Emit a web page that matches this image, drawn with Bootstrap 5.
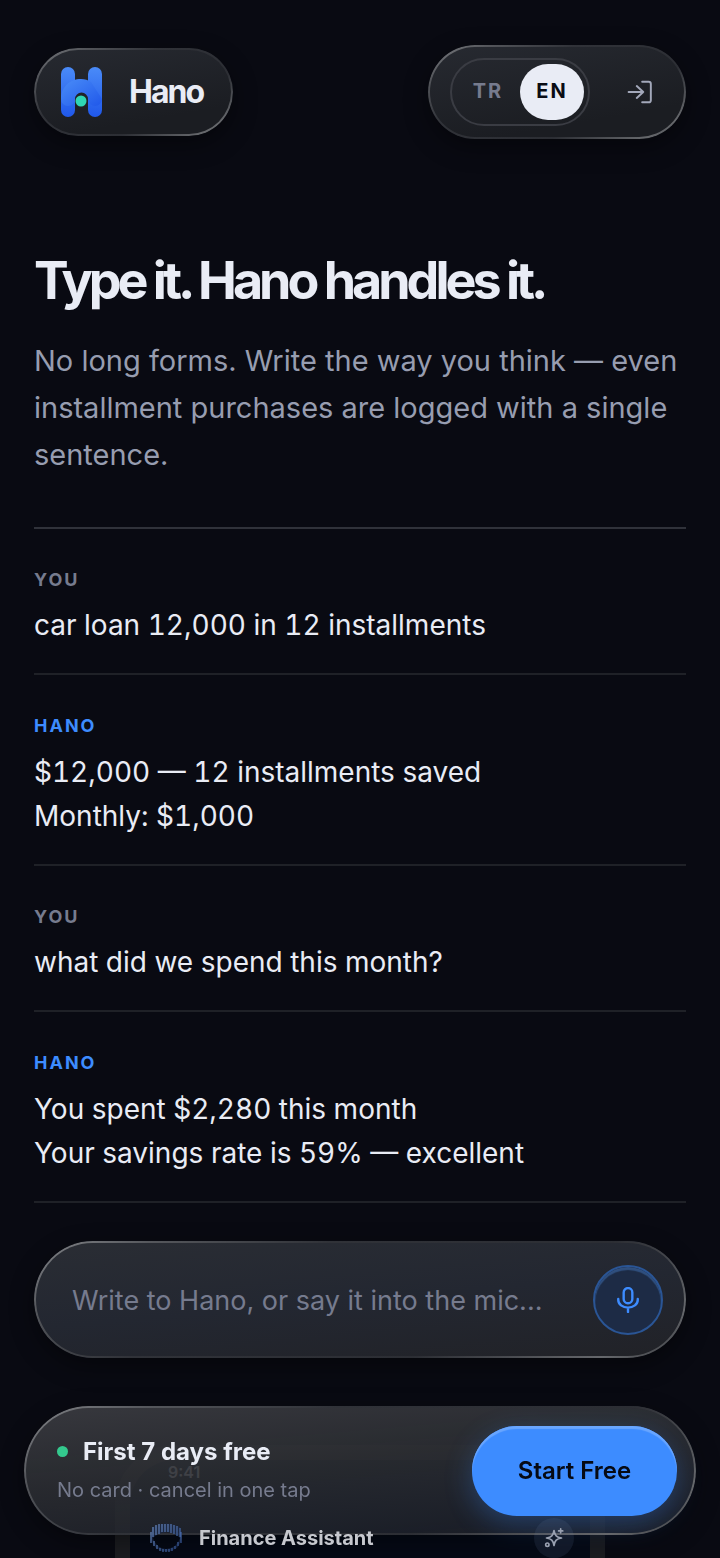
<!DOCTYPE html>
<html lang="en" data-bs-theme="dark">
<head>
<meta charset="utf-8">
<meta name="viewport" content="width=device-width, initial-scale=1">
<title>Hano</title>
<link href="https://cdn.jsdelivr.net/npm/bootstrap@5.3.0/dist/css/bootstrap.min.css" rel="stylesheet">
<style>
:root{--ink:#e9ecf5;--soft:#979db0;--dim:#767b8e;--accent:#3d8cff}
body{font-family:Inter,"Liberation Sans",sans-serif;background:#090a12;color:var(--ink)}
.shell{padding:45px 34px 0}
/* frosted pill with a lit rim at the top left and bottom right */
.glass{position:relative;border-radius:999px;background:linear-gradient(170deg,#272a31,#1b1d22 75%);box-shadow:0 8px 24px rgba(0,0,0,.4)}
.glass::before{content:"";position:absolute;inset:0;border-radius:inherit;padding:2px;pointer-events:none;
background:linear-gradient(150deg,#85878b 0,#55575c 14%,#303238 35%,#2c2e34 68%,#66686c 90%,#36383d 100%);
-webkit-mask:linear-gradient(#000 0 0) content-box,linear-gradient(#000 0 0);-webkit-mask-composite:xor;mask-composite:exclude}
.brand{height:88px;padding:0 30px 0 26px;gap:26px;color:var(--ink)}
.brand-name{font-size:32px;font-weight:700;letter-spacing:-2px;line-height:40px}
.tools{height:94px;padding:0 24px 0 22px;gap:28px}
.langs{height:68px;padding:4px;border:2px solid #3a3c43;border-radius:34px}
.lang{height:56px;width:64px;border:0;border-radius:28px;background:none;color:var(--dim);font-size:20px;font-weight:700;letter-spacing:2px;padding:0 0 2px}
.lang.on{background:var(--ink);color:#0a0c14}
.login{width:44px;height:44px;color:#a3a8ba}
.title{font-size:52px;font-weight:700;letter-spacing:-4px;line-height:60px;margin:112px 0 0;color:var(--ink)}
.intro{font-size:29px;line-height:47px;color:var(--soft);margin:26px 0 0}
.chat{margin:49px 0 0;border-top:2px solid #30323a}
.turn{padding:36px 0 26px;border-bottom:2px solid #1f2127}
.who{font-size:18px;line-height:30px;font-weight:700;letter-spacing:2px;color:var(--dim);margin:0 0 8px}
.who.hano{color:var(--accent);margin-bottom:9px}
.said{font-size:28px;line-height:44px;margin:0;font-variant-numeric:tabular-nums}
.ask{height:117px;margin-top:38px;padding:0 23px 0 38px;gap:24px;background:linear-gradient(175deg,#2a2d34,#232731 50%,#212227)}
.ask-box{font-size:27px;color:var(--ink);background:none;border:0;outline:0;padding:4px 0 0;min-width:0}
.ask-box::placeholder{color:var(--dim);opacity:1}
.mic{width:70px;height:70px;border-radius:50%;border:2px solid #2a5595;background:#1d2b45;color:var(--accent);box-shadow:inset 0 3px 1px #30507f}
.phone{margin:87px 81px 0;border:15px solid #1c1d21;border-bottom:0;border-radius:60px 60px 0 0;background:#050a16;padding:0 16px 0 20px}
.clock{font-size:16px;line-height:20px;font-weight:600;color:#c0c2c8;margin-bottom:36px;padding:2px 0 0 18px}
/* the assistant header stays legible across the edge of the offer bar */
.phone-head{position:relative;z-index:2;gap:16px}
.phone-title{font-size:20px;font-weight:700;line-height:40px;color:#c6c8ce}
.spark{width:40px;height:40px;border-radius:50%;background:rgba(110,130,170,.13);color:#9aa1b1}
.offer{position:fixed;z-index:1;left:24px;right:24px;bottom:23px;height:129px;padding:0 19px 0 33px;background:linear-gradient(175deg,rgba(58,59,64,.95),rgba(44,46,51,.88) 45%,rgba(34,37,45,.84) 80%,rgba(32,35,43,.7))}
.offer-title{font-size:24px;font-weight:700;line-height:32px;gap:15px}
.offer-title::before{content:"";width:11px;height:11px;border-radius:50%;background:#34c98e}
.offer-note{font-size:20px;line-height:28px;color:var(--dim);margin:8px 0 2px}
.start{height:90px;width:205px;border:0;border-radius:45px;background:var(--accent);color:#060a14;font-size:24px;font-weight:600;box-shadow:inset 0 3px 1px #69a6ff,0 8px 28px rgba(61,140,255,.3)}
</style>
</head>
<body>
<div class="shell min-vh-100 d-flex flex-column">
<header class="d-flex justify-content-between align-items-center">
<a href="#" class="glass brand d-flex align-items-center text-decoration-none">
<svg width="43" height="52" viewBox="0 0 43 52" aria-hidden="true">
<defs><linearGradient id="hg" x1="0" y1="0" x2="0" y2="1"><stop offset="0" stop-color="#4a8bf8"/><stop offset="1" stop-color="#2058ea"/></linearGradient>
<linearGradient id="ha" x1="0" y1="0" x2="1" y2="1"><stop offset="0" stop-color="#4a8df8"/><stop offset="1" stop-color="#2058ea"/></linearGradient></defs>
<rect x="1" y="1" width="14" height="50" rx="7" fill="url(#hg)"/><rect x="28" y="1" width="14" height="50" rx="7" fill="url(#hg)"/>
<path d="M1 33C1 21 10 13 21 13c4 0 7 1 10 3l11 17a7 7 0 0 1-14 0a6 6 0 0 0-13 0a7 7 0 0 1-14 0z" fill="url(#ha)"/>
<circle cx="21" cy="35" r="5.500" fill="#2fd6b4"/></svg>
<span class="brand-name">Hano</span></a>
<div class="glass tools d-flex align-items-center">
<div class="langs d-flex" role="group" aria-label="Language"><button type="button" class="lang">TR</button><button type="button" class="lang on">EN</button></div>
<a href="#" class="login d-flex align-items-center justify-content-center" aria-label="Sign in"><svg width="26" height="26" viewBox="0 0 24 24" fill="none" stroke="currentColor" stroke-width="1.800" stroke-linecap="round" stroke-linejoin="round"><path d="M14 2.500h6a2 2 0 0 1 2 2v15a2 2 0 0 1-2 2h-6M9 17.500l6-5.500-6-5.500M15 12H1.500"/></svg></a>
</div>
</header>
<main class="flex-grow-1 d-flex flex-column">
<h1 class="title">Type it. Hano handles it.</h1>
<p class="intro">No long forms. Write the way you think — even installment purchases are logged with a single sentence.</p>
<section class="chat">
<div class="turn"><h2 class="who">YOU</h2><p class="said">car loan 12,000 in 12 installments</p></div>
<div class="turn"><h2 class="who hano">HANO</h2><p class="said">$12,000 — 12 installments saved<br>Monthly: $1,000</p></div>
<div class="turn"><h2 class="who">YOU</h2><p class="said">what did we spend this month?</p></div>
<div class="turn"><h2 class="who hano">HANO</h2><p class="said">You spent $2,280 this month<br>Your savings rate is 59% — excellent</p></div>
</section>
<form class="glass ask d-flex align-items-center">
<input class="ask-box flex-grow-1" type="text" aria-label="Message" placeholder="Write to Hano, or say it into the mic...">
<button type="button" class="mic d-flex align-items-center justify-content-center p-0 flex-shrink-0" aria-label="Speak"><svg width="26" height="26" viewBox="0 0 24 24" fill="none" stroke="currentColor" stroke-width="2.200" stroke-linecap="round" stroke-linejoin="round"><rect x="8" y="1" width="8" height="14" rx="4"/><path d="M3 11v1a9 7 0 0 0 18 0v-1M12 19v4"/></svg></button>
</form>
<section class="phone flex-grow-1">
<div class="clock">9:41</div>
<div class="phone-head d-flex align-items-center">
<svg width="33" height="30" viewBox="0 0 33 30" aria-hidden="true">
<defs><linearGradient id="orb" x1="0" y1="0" x2="1" y2="1"><stop offset="0" stop-color="#6f8fc4"/><stop offset="1" stop-color="#2c4c8c"/></linearGradient></defs>
<path d="M3 4Q16-3 30 4Q35 15 27 25Q16 32 6 25Q-3 15 3 4zM3 15Q6 25 16 26Q27 25 30 15Q25 10 17 9Q8 10 3 15z" fill="#1a2c4f" fill-rule="evenodd" opacity=".6"/>
<path d="M3 4v10M6 2v10M9 1v10M12 1v8M15 1v8M18 1v8M21 1v9M24 2v9M27 3v10M30 5v9M1 9v11M4 18v5M7 22v4M10 25v3M13 26v3M16 26v3M19 26v3M22 25v3M25 23v3M28 19v4M31 9v11" fill="none" stroke="url(#orb)" stroke-width="1.200"/></svg>
<span class="phone-title flex-grow-1">Finance Assistant</span>
<span class="spark d-flex align-items-center justify-content-center"><svg width="20" height="20" viewBox="0 0 24 24" fill="none" stroke="currentColor" stroke-width="2" stroke-linejoin="round" stroke-linecap="round" aria-hidden="true"><path d="M12 3c1 6 3 8 9 9-6 1-8 3-9 9-1-6-3-8-9-9 6-1 8-3 9-9zM20 1v5M17.500 3.500h5"/><circle cx="4" cy="20" r="2"/></svg></span>
</div>
</section>
</main>
</div>
<aside class="glass offer d-flex align-items-center justify-content-between">
<div><div class="offer-title d-flex align-items-center">First 7 days free</div><p class="offer-note">No card · cancel in one tap</p></div>
<button type="button" class="start">Start Free</button>
</aside>
<script src="https://cdn.jsdelivr.net/npm/bootstrap@5.3.0/dist/js/bootstrap.bundle.min.js"></script>
</body>
</html>
